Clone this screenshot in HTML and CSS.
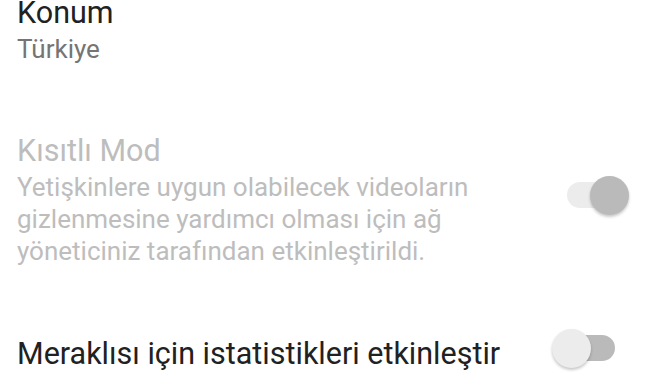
FILE: index.html
```html
<!DOCTYPE html>
<html lang="tr">

<head>
    <meta charset="UTF-8">
    <meta name="viewport" content="width=device-width, initial-scale=1.0">
    <title>Ayarlar</title>
    <link rel="stylesheet" href="styles.css">
</head>

<body>
    <div class="settings">
        <div class="row">
            <div class="row-text">
                <div class="row-title">Konum</div>
                <div class="row-sub">Türkiye</div>
            </div>
        </div>

        <div class="row row-restricted disabled">
            <div class="row-text">
                <div class="row-title">Kısıtlı Mod</div>
                <div class="row-sub">Yetişkinlere uygun olabilecek videoların gizlenmesine yardımcı olması için ağ yöneticiniz tarafından etkinleştirildi.</div>
            </div>
            <div class="switch switch-on">
                <span class="track"></span>
                <span class="thumb"></span>
            </div>
        </div>

        <div class="row row-stats">
            <div class="row-text">
                <div class="row-title">Meraklısı için istatistikleri etkinleştir</div>
            </div>
            <div class="switch switch-off">
                <span class="track"></span>
                <span class="thumb"></span>
            </div>
        </div>
    </div>
</body>

</html>
```

FILE: styles.css
```css
body {
    margin: 0;
    background: #fff;
    font-family: Roboto, "Noto Sans", Arial, sans-serif;
    overflow: hidden;
}

.settings {
    margin-top: -5px;
    padding-left: 17px;
    padding-right: 43px;
}

.row {
    display: flex;
    align-items: center;
    justify-content: space-between;
}

.row-text {
    max-width: 485px;
}

.row-title {
    font-size: 30.5px;
    line-height: 36px;
    color: #212121;
}

.row-sub {
    font-size: 26px;
    line-height: 32px;
    color: #757575;
    margin-top: 2px;
}

.row-restricted {
    margin-top: 68px;
}

.disabled .row-title,
.disabled .row-sub {
    color: #bdbdbd;
}

.row-restricted .switch {
    margin-bottom: 8px;
}

.row-stats {
    margin-top: 69px;
    align-items: flex-start;
}

.row-stats .switch {
    margin-top: -7px;
}

/* switches */
.switch {
    position: relative;
    width: 77px;
    height: 40px;
    flex-shrink: 0;
}

.track {
    position: absolute;
    left: 15px;
    width: 48px;
    top: 6px;
    height: 26px;
    border-radius: 13px;
}

.thumb {
    position: absolute;
    top: 0;
    width: 39px;
    height: 39px;
    border-radius: 50%;
    box-shadow: 0 2px 3px rgba(0, 0, 0, 0.22);
}

.switch-on .track {
    background: #ececec;
}

.switch-on .thumb {
    left: 38px;
    background: #bababa;
}

.switch-off .track {
    background: #bababa;
}

.switch-off .thumb {
    left: 0;
    background: #ececec;
}
```
